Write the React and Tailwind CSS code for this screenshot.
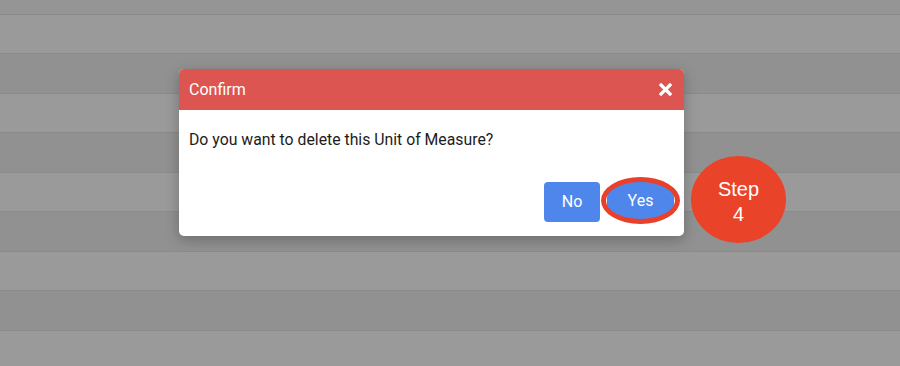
import React from "react";

const rows = [
  { h: "h-[15px]", bg: "bg-[#959595]" },
  { h: "h-[39px]", bg: "bg-[#9a9a9a]" },
  { h: "h-[40px]", bg: "bg-[#919191]" },
  { h: "h-[39px]", bg: "bg-[#9a9a9a]" },
  { h: "h-[40px]", bg: "bg-[#919191]" },
  { h: "h-[39px]", bg: "bg-[#9a9a9a]" },
  { h: "h-[40px]", bg: "bg-[#919191]" },
  { h: "h-[39px]", bg: "bg-[#9a9a9a]" },
  { h: "h-[40px]", bg: "bg-[#919191]" },
  { h: "h-[35px]", bg: "bg-[#9a9a9a]" },
];

export default function App() {
  return (
    <div className="relative w-[900px] h-[366px] overflow-hidden bg-[#999999] font-['Roboto',sans-serif]">
      <div className="flex flex-col">
        {rows.map((r, i) => (
          <div
            key={i}
            className={`${r.h} ${r.bg} ${i < rows.length - 1 ? "border-b border-[#8a8a8a]" : ""}`}
          />
        ))}
      </div>

      {/* Dialog */}
      <div className="absolute left-[179px] top-[69px] w-[505px] h-[167px] bg-white rounded-[5px] shadow-[0_4px_14px_rgba(0,0,0,0.25)] flex flex-col overflow-hidden">
        <div className="h-[41px] bg-[#dd5550] flex items-center justify-between pl-[10px] pr-[12px]">
          <span className="text-white text-[16px]">Confirm</span>
          <svg width="13" height="13" viewBox="0 0 13 13">
            <path d="M2 2 L11 11 M11 2 L2 11" stroke="white" strokeWidth="3.2" strokeLinecap="square" />
          </svg>
        </div>
        <div className="flex-1 flex flex-col pl-[10px] pr-[4px]">
          <p className="mt-[20px] text-[15.8px] text-[#1c1c1c] leading-[20px]">
            Do you want to delete this Unit of Measure?
          </p>
          <div className="mt-auto mb-[12px] flex justify-end items-start gap-[1px]">
            <div className="mt-[5px] w-[56px] h-[40px] bg-[#4f86ec] rounded-[4px] flex items-center justify-center text-white text-[16px]">
              No
            </div>
            <div className="relative w-[79px] h-[47px] flex items-center">
              <div className="ml-[6px] w-[67px] h-[38px] bg-[#4f86ec] rounded-[16px] flex items-center justify-center text-white text-[16px]">
                Yes
              </div>
              <div className="absolute inset-0 rounded-[50%] border-[5px] border-[#e8402a]" />
            </div>
          </div>
        </div>
      </div>

      {/* Step badge */}
      <div className="absolute left-[691px] top-[156px] w-[95px] h-[87px] rounded-[50%] bg-[#e9432a] flex flex-col items-center justify-center pt-[4px] text-white text-[20px] leading-[25px] font-['Liberation_Sans',sans-serif]">
        <span>Step</span>
        <span>4</span>
      </div>
    </div>
  );
}
